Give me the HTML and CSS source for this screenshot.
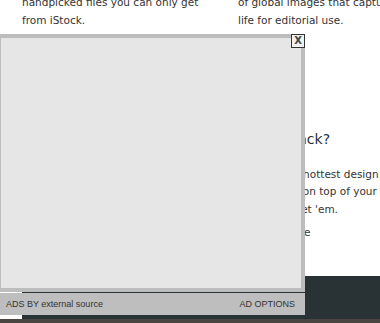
FILE: index.html
```html
<!DOCTYPE html>
<html>
<head>
<meta charset="utf-8">
<link rel="stylesheet" href="styles.css">
</head>
<body>
<div class="page">
  <div class="cols">
    <div class="col col-left">
      <p class="txt">handpicked files you can only get<br>from iStock.</p>
    </div>
    <div class="col col-right">
      <p class="txt">of global images that capture<br>life for editorial use.</p>
      <h3 class="head">Fund a hack?</h3>
      <p class="txt body">Grab all the hottest design<br>sorted right on top of your<br>inbox. Go, get 'em.</p>
      <p class="txt more">Find out more</p>
    </div>
  </div>
  <div class="band"></div>
  <div class="strip"></div>
</div>

<div class="ad">
  <div class="ad-box"></div>
  <div class="ad-foot">
    <span>ADS BY external source</span>
    <span>AD OPTIONS</span>
  </div>
  <div class="ad-close">X</div>
</div>
</body>
</html>
```
FILE: styles.css
```css
* { box-sizing: border-box; }
html, body { margin: 0; padding: 0; }
body {
  width: 380px;
  height: 323px;
  overflow: hidden;
  background: #fff;
  font-family: "DejaVu Sans", sans-serif;
  color: #333;
  position: relative;
}
.page {
  display: flex;
  flex-direction: column;
  height: 323px;
}
.cols {
  display: flex;
  padding-left: 22px;
  margin-top: -6px;
  height: 282px;
  flex: none;
}
.col-left { width: 216px; flex: none; }
.col-right { flex: 1; white-space: nowrap; }
.txt {
  margin: 0;
  font-size: 10.5px;
  line-height: 17.5px;
}
.head {
  margin: 99.5px 0 0;
  font-size: 14px;
  line-height: 20px;
  font-weight: normal;
  color: #27313c;
}
.body { margin-top: 17.4px; }
.more { margin-top: 6px; }
.band {
  height: 43px;
  margin-left: 22px;
  background: #293234;
  flex: none;
}
.strip {
  flex: 1;
  background: #4a4541;
}
.ad {
  position: absolute;
  left: -3px;
  top: 34px;
  width: 308px;
  display: flex;
  flex-direction: column;
}
.ad-box {
  height: 258px;
  border: 4px solid #bdbdbd;
  background: #e6e6e6;
}
.ad-foot {
  margin-top: 1px;
  height: 22px;
  background: #bebebe;
  display: flex;
  justify-content: space-between;
  align-items: center;
  padding: 0 10px 0 9px;
  font-family: "Liberation Sans", Arial, sans-serif;
  font-size: 9px;
  color: #333;
}
.ad-close {
  position: absolute;
  top: 0;
  right: 0;
  width: 14px;
  height: 14px;
  border: 1px solid #333;
  background: #f0f0f0;
  font-family: "DejaVu Sans", sans-serif;
  font-weight: bold;
  font-size: 10px;
  line-height: 12px;
  text-align: center;
  color: #444;
}
```
